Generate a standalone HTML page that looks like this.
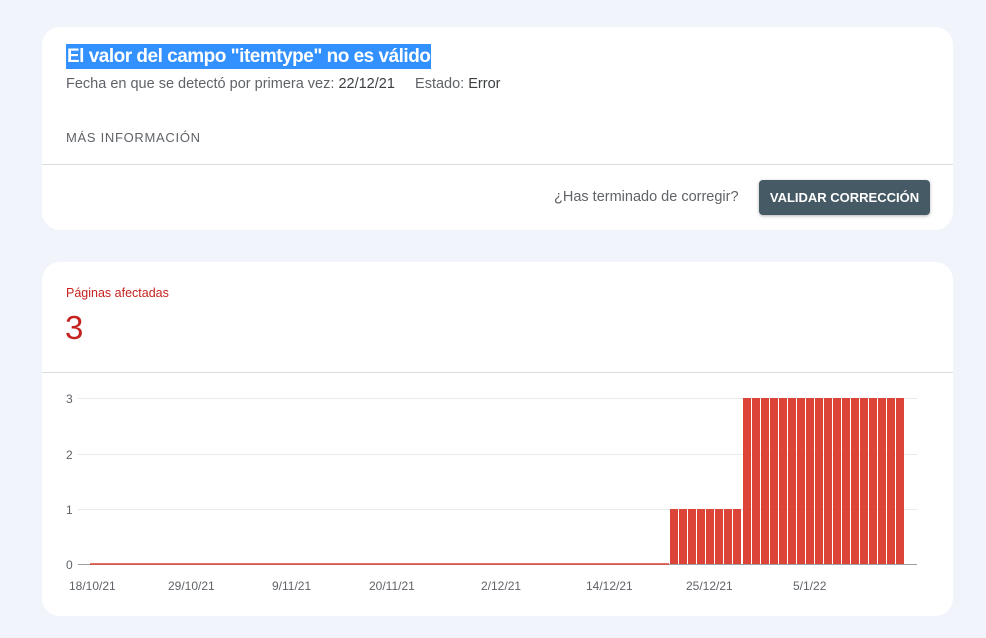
<!DOCTYPE html>
<html><head><meta charset="utf-8"><style>
body{margin:0;background:#f1f4fb;font-family:"Liberation Sans",Roboto,sans-serif;width:986px;height:638px;position:relative;overflow:hidden}
.card{position:absolute;left:42px;width:911px;background:#fff;border-radius:18px}
.t{position:absolute;white-space:nowrap}
</style></head><body>
<div class="card" style="top:27px;height:203px">
 <div class="t" style="left:24px;top:17px;background:#3390ff;color:#fff;font-size:19px;font-weight:bold;height:25px;line-height:25px;padding:0 1px;letter-spacing:-0.5px">El valor del campo "itemtype" no es válido</div>
 <div class="t" style="left:24px;top:49px;font-size:14.5px;color:#5f6368">Fecha en que se detectó por primera vez: <span style="color:#3c4043">22/12/21</span>&nbsp;&nbsp;&nbsp;&nbsp; Estado: <span style="color:#3c4043">Error</span></div>
 <div class="t" style="left:24px;top:103px;font-size:13px;color:#5f6368;letter-spacing:0.7px">MÁS INFORMACIÓN</div>
 <div style="position:absolute;left:0;right:0;top:137px;border-top:1px solid #dadce0"></div>
 <div class="t" style="left:512px;top:162px;font-size:14.5px;color:#5f6368">¿Has terminado de corregir?</div>
 <div class="t" style="left:717px;top:153px;width:171px;height:35px;background:#455a64;border-radius:4px;color:#fff;font-weight:bold;font-size:13px;line-height:35px;text-align:center;box-shadow:0 1px 3px rgba(0,0,0,.3);letter-spacing:0px">VALIDAR CORRECCIÓN</div>
</div>
<div class="card" style="top:262px;height:354px">
 <div class="t" style="left:24px;top:24px;font-size:12.5px;color:#c5221f">Páginas afectadas</div>
 <div class="t" style="left:23px;top:47px;font-size:33px;color:#c5221f">3</div>
 <div style="position:absolute;left:0;right:0;top:110px;border-top:1px solid #dadce0"></div>
</div>
<svg width="986" height="638" style="position:absolute;left:0;top:0" font-family="Liberation Sans, sans-serif" font-size="12" fill="#5f6368">
 <g stroke="#e8eaed" stroke-width="1">
  <line x1="78" y1="398.5" x2="917" y2="398.5"/><line x1="78" y1="454.5" x2="917" y2="454.5"/><line x1="78" y1="509.5" x2="917" y2="509.5"/>
 </g>
 <line x1="78" y1="564.5" x2="917" y2="564.5" stroke="#9aa0a6"/>
 <line x1="90" y1="564" x2="669" y2="564" stroke="#db4437" stroke-width="1.5"/>
 <text x="66" y="403">3</text><text x="66" y="459">2</text><text x="66" y="514">1</text><text x="66" y="569">0</text>
 <g fill="#db4437">
  <rect x="670" y="509" width="8" height="55"/><rect x="679" y="509" width="8" height="55"/><rect x="688" y="509" width="8" height="55"/><rect x="697" y="509" width="8" height="55"/><rect x="706" y="509" width="8" height="55"/><rect x="715" y="509" width="8" height="55"/><rect x="724" y="509" width="8" height="55"/><rect x="733" y="509" width="8" height="55"/>
  <rect x="743" y="398" width="8" height="166"/><rect x="752" y="398" width="8" height="166"/><rect x="761" y="398" width="8" height="166"/><rect x="770" y="398" width="8" height="166"/><rect x="779" y="398" width="8" height="166"/><rect x="788" y="398" width="8" height="166"/><rect x="797" y="398" width="8" height="166"/><rect x="806" y="398" width="8" height="166"/><rect x="815" y="398" width="8" height="166"/><rect x="824" y="398" width="8" height="166"/><rect x="833" y="398" width="8" height="166"/><rect x="842" y="398" width="8" height="166"/><rect x="851" y="398" width="8" height="166"/><rect x="860" y="398" width="8" height="166"/><rect x="869" y="398" width="8" height="166"/><rect x="878" y="398" width="8" height="166"/><rect x="887" y="398" width="8" height="166"/><rect x="896" y="398" width="8" height="166"/>
 </g>
 <text x="69" y="590">18/10/21</text><text x="168" y="590">29/10/21</text><text x="272" y="590">9/11/21</text><text x="369" y="590">20/11/21</text><text x="481" y="590">2/12/21</text><text x="586" y="590">14/12/21</text><text x="686" y="590">25/12/21</text><text x="793" y="590">5/1/22</text>
</svg>
</body></html>
